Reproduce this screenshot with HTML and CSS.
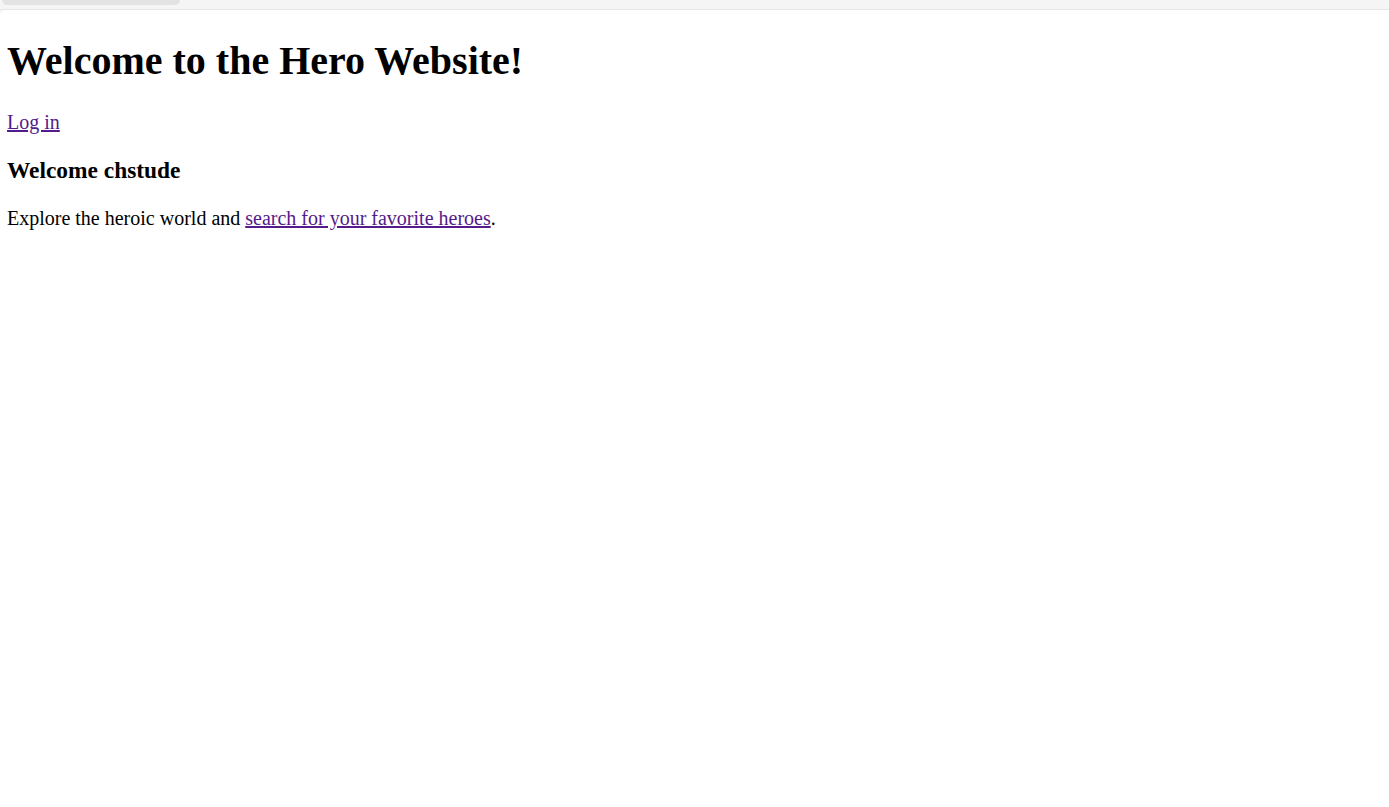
FILE: index.html
```html
<!DOCTYPE html>
<html lang="en">
<head>
<meta charset="utf-8">
<title>Hero Website</title>
<link rel="stylesheet" href="styles.css">
</head>
<body>
<div class="chrome"><div class="tab"></div></div>
<main class="page">
  <h1 class="title">Welcome to the Hero Website!</h1>
  <nav class="nav"><p class="nav-line"><a href="#" class="link">Log in</a></p></nav>
  <h3 class="greeting">Welcome chstude</h3>
  <p class="intro">Explore the heroic world and <a href="#" class="link">search for your favorite heroes</a>.</p>
</main>
</body>
</html>
```
FILE: styles.css
```css
html, body {
  margin: 0;
  padding: 0;
  background: #f5f5f5;
  height: 100%;
}
body {
  display: flex;
  flex-direction: column;
  font-family: "Liberation Serif", "Times New Roman", serif;
  font-size: 20px;
  color: #000;
}
.chrome {
  height: 9px;
  flex: none;
  display: flex;
  padding-left: 2px;
  background: #f5f5f5;
  border-bottom: 1px solid #e6e6e6;
}
.tab {
  width: 178px;
  height: 5px;
  background: #e3e3e3;
  border-radius: 0 0 6px 6px;
}
.page {
  flex: 1;
  background: #fff;
  border-radius: 6px 0 0 0;
  padding: 0 7px;
  display: flow-root;
}
.title {
  font-size: 40px;
  font-weight: bold;
  margin: 26.5px 0 0;
}
.nav {
  display: flow-root;
}
.nav-line {
  margin: 27.5px 0 0;
}
.greeting {
  font-size: 23.4px;
  font-weight: bold;
  margin: 22.5px 0 0;
}
.intro {
  margin: 23.5px 0 20px;
}
.link {
  color: #551a8b;
}
```
